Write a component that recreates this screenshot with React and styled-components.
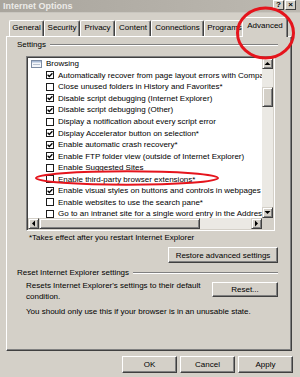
import React from "react";
import styled, { createGlobalStyle } from "styled-components";

const FACE = "#d4d0c8";

const GlobalStyle = createGlobalStyle`
  html, body { margin: 0; padding: 0; background: ${FACE}; }
  body { font-family: "Liberation Sans", Arial, sans-serif; color: #000; }
`;

const tabs = [
  { label: "General", w: 35 },
  { label: "Security", w: 36 },
  { label: "Privacy", w: 35 },
  { label: "Content", w: 36 },
  { label: "Connections", w: 53 },
  { label: "Programs", w: 41 },
  { label: "Advanced", w: 46, active: true },
];

const settings = [
  { text: "Automatically recover from page layout errors with Compatibility View", on: true },
  { text: "Close unused folders in History and Favorites*", on: false },
  { text: "Disable script debugging (Internet Explorer)", on: true },
  { text: "Disable script debugging (Other)", on: true },
  { text: "Display a notification about every script error", on: false },
  { text: "Display Accelerator button on selection*", on: true },
  { text: "Enable automatic crash recovery*", on: true },
  { text: "Enable FTP folder view (outside of Internet Explorer)", on: true },
  { text: "Enable Suggested Sites", on: false },
  { text: "Enable third-party browser extensions*", on: false },
  { text: "Enable visual styles on buttons and controls in webpages", on: true },
  { text: "Enable websites to use the search pane*", on: false },
  { text: "Go to an intranet site for a single word entry in the Address bar", on: false },
];

const Window = styled.div`
  position: relative;
  width: 300px;
  height: 377px;
  background: ${FACE};
  overflow: hidden;
  font-size: 8px;
`;

const TitleBar = styled.div`
  height: 12px;
  display: flex;
  align-items: center;
  justify-content: space-between;
  padding: 0 4px 0 3px;
  background: linear-gradient(90deg, #a9a59d, #bdb9b1);
  border-bottom: 1px solid #c9c6bf;
`;

const Title = styled.span`
  font-size: 9px;
  font-weight: bold;
  color: #ecebe8;
  line-height: 12px;
`;

const CaptionButtons = styled.div`
  display: flex;
  gap: 1px;
  align-self: flex-start;
`;

const CaptionButton = styled.div`
  width: 11px;
  height: 10px;
  box-sizing: border-box;
  background: ${FACE};
  border: 1px solid;
  border-color: #fff #404040 #404040 #fff;
  font-size: 8px;
  font-weight: bold;
  line-height: 8px;
  text-align: center;
`;

const TabStrip = styled.div`
  display: flex;
  align-items: flex-end;
  height: 19px;
  margin-top: 4px;
  padding-left: 9px;
`;

const Tab = styled.div`
  position: relative;
  box-sizing: border-box;
  width: ${(p) => p.$w}px;
  height: ${(p) => (p.$active ? 20 : 16)}px;
  margin-left: ${(p) => (p.$active ? -3 : 0)}px;
  margin-bottom: ${(p) => (p.$active ? -1 : 0)}px;
  z-index: ${(p) => (p.$active ? 2 : 1)};
  background: ${FACE};
  border-top: 1px solid #fff;
  border-left: 1px solid #fff;
  border-right: 1px solid #404040;
  border-radius: 2px 2px 0 0;
  box-shadow: inset -1px 0 #808080;
  font-size: 8px;
  line-height: ${(p) => (p.$active ? 15 : 14)}px;
  text-align: center;
  white-space: nowrap;
  overflow: hidden;
`;

const Panel = styled.div`
  box-sizing: border-box;
  width: 286px;
  height: 315px;
  margin-left: 6px;
  display: flex;
  flex-direction: column;
  padding: 3px 13px 0 10px;
  border: 1px solid;
  border-color: #fff #404040 #404040 #fff;
  box-shadow: inset -1px -1px #808080;
`;

const GroupHeader = styled.div`
  display: flex;
  align-items: center;
  gap: 4px;
  height: 10px;
  margin-top: ${(p) => p.$top || 0}px;
  line-height: 10px;
  white-space: nowrap;

  &::after {
    content: "";
    flex: 1;
    height: 0;
    border-top: 1px solid #808080;
    border-bottom: 1px solid #fff;
  }
`;

const ListBox = styled.div`
  box-sizing: border-box;
  width: 249px;
  height: 175px;
  margin: 6px 0 0 9px;
  padding: 1px;
  border: 1px solid;
  border-color: #808080 #fff #fff #808080;
  box-shadow: inset 1px 1px #404040, inset -1px -1px ${FACE};
  display: grid;
  grid-template-columns: 1fr 11px;
  grid-template-rows: 1fr 11px;
`;

const Viewport = styled.div`
  background: #fff;
  overflow: hidden;
`;

const Row = styled.div`
  height: 11.55px;
  display: flex;
  align-items: center;
  gap: 4px;
  padding-left: ${(p) => p.$indent}px;
  white-space: nowrap;
  font-size: 8px;
`;

const Box = styled.div`
  flex: none;
  width: 8px;
  height: 8px;
  box-sizing: border-box;
  border: 1px solid #1c1c1c;
  background: #fff;
  display: flex;
  align-items: center;
  justify-content: center;
`;

const VScroll = styled.div`
  display: flex;
  flex-direction: column;
`;

const HScroll = styled.div`
  display: flex;
`;

const Track = styled.div`
  flex: 1;
  display: flex;
  flex-direction: ${(p) => (p.$vertical ? "column" : "row")};
  background: #ebe9e4;
`;

const Thumb = styled.div`
  box-sizing: border-box;
  flex: none;
  width: ${(p) => (p.$vertical ? "100%" : `${p.$size}px`)};
  height: ${(p) => (p.$vertical ? `${p.$size}px` : "100%")};
  margin-top: ${(p) => (p.$vertical ? p.$offset : 0)}px;
  background: ${FACE};
  border: 1px solid;
  border-color: ${FACE} #404040 #404040 ${FACE};
  box-shadow: inset 1px 1px #fff, inset -1px -1px #808080;
`;

const ArrowButton = styled.div`
  flex: none;
  box-sizing: border-box;
  width: 11px;
  height: 11px;
  background: ${FACE};
  border: 1px solid;
  border-color: ${FACE} #404040 #404040 ${FACE};
  box-shadow: inset 1px 1px #fff, inset -1px -1px #808080;
  display: flex;
  align-items: center;
  justify-content: center;
`;

const Corner = styled.div`
  background: ${FACE};
`;

const Note = styled.div`
  margin: 2px 0 0 12px;
  line-height: 10px;
  white-space: nowrap;
`;

const Button = styled.div`
  box-sizing: border-box;
  flex: none;
  width: ${(p) => p.$w}px;
  height: ${(p) => p.$h}px;
  margin-top: ${(p) => p.$top || 0}px;
  align-self: ${(p) => (p.$end ? "flex-end" : "auto")};
  background: ${FACE};
  border: 1px solid;
  border-color: #fff #404040 #404040 #fff;
  box-shadow: inset -1px -1px #808080;
  display: flex;
  align-items: center;
  justify-content: center;
  font-size: 8px;
  white-space: nowrap;
`;

const ResetRow = styled.div`
  display: flex;
  justify-content: space-between;
  margin: 1.5px 0 0 9px;
`;

const Para = styled.div`
  line-height: 11px;
  margin-left: ${(p) => p.$left || 0}px;
  margin-top: ${(p) => p.$top || 0}px;
  white-space: nowrap;
`;

const Footer = styled.div`
  display: flex;
  justify-content: flex-end;
  gap: 3px;
  margin-top: 5px;
  padding-right: 7px;
`;

const Overlay = styled.svg`
  position: absolute;
  left: 0;
  top: 0;
  pointer-events: none;
  z-index: 5;
`;

const Check = () => (
  <svg width="6" height="6" viewBox="0 0 6 6">
    <path d="M0.6 2.8 L2.3 4.5 L5.4 1.2" fill="none" stroke="#000" strokeWidth="1.3" />
  </svg>
);

const Arrow = ({ dir }) => {
  const pts = {
    up: "0.5,4 3.5,1 6.5,4",
    down: "0.5,1 3.5,4 6.5,1",
    left: "4,0.5 1,3.5 4,6.5",
    right: "1,0.5 4,3.5 1,6.5",
  }[dir];
  const vertical = dir === "up" || dir === "down";
  return (
    <svg width={vertical ? 7 : 5} height={vertical ? 5 : 7} viewBox={vertical ? "0 0 7 5" : "0 0 5 7"}>
      <polygon points={pts} fill="#000" />
    </svg>
  );
};

const BrowsingIcon = () => (
  <svg width="11" height="8" viewBox="0 0 11 8" style={{ flex: "none" }}>
    <rect x="0.5" y="0.5" width="10" height="7" fill="#f4f6fa" stroke="#7d8ca3" />
    <rect x="1" y="1" width="9" height="1.5" fill="#a9bbd6" />
    <line x1="2" y1="4.5" x2="9" y2="4.5" stroke="#b8c2d0" />
  </svg>
);

export default function App() {
  return (
    <>
      <GlobalStyle />
      <Window>
        <TitleBar>
          <Title>Internet Options</Title>
          <CaptionButtons>
            <CaptionButton>?</CaptionButton>
            <CaptionButton>×</CaptionButton>
          </CaptionButtons>
        </TitleBar>

        <TabStrip>
          {tabs.map((t) => (
            <Tab key={t.label} $w={t.w} $active={t.active}>
              {t.label}
            </Tab>
          ))}
        </TabStrip>

        <Panel>
          <GroupHeader>Settings</GroupHeader>
          <ListBox>
            <Viewport>
              <Row $indent={3}>
                <BrowsingIcon />
                Browsing
              </Row>
              {settings.map((s) => (
                <Row key={s.text} $indent={18}>
                  <Box>{s.on && <Check />}</Box>
                  {s.text}
                </Row>
              ))}
            </Viewport>
            <VScroll>
              <ArrowButton>
                <Arrow dir="up" />
              </ArrowButton>
              <Track $vertical>
                <Thumb $vertical $size={20} $offset={18} />
              </Track>
              <ArrowButton>
                <Arrow dir="down" />
              </ArrowButton>
            </VScroll>
            <HScroll>
              <ArrowButton>
                <Arrow dir="left" />
              </ArrowButton>
              <Track>
                <Thumb $size={161} />
              </Track>
              <ArrowButton>
                <Arrow dir="right" />
              </ArrowButton>
            </HScroll>
            <Corner />
          </ListBox>
          <Note>*Takes effect after you restart Internet Explorer</Note>
          <Button $w={110} $h={16} $top={4} $end>
            Restore advanced settings
          </Button>
          <GroupHeader $top={5}>Reset Internet Explorer settings</GroupHeader>
          <ResetRow>
            <Para>
              Resets Internet Explorer's settings to their default
              <br />
              condition.
            </Para>
            <Button $w={66} $h={15} $top={2.5}>
              Reset...
            </Button>
          </ResetRow>
          <Para $left={9} $top={4}>
            You should only use this if your browser is in an unusable state.
          </Para>
        </Panel>

        <Footer>
          <Button $w={55} $h={17}>OK</Button>
          <Button $w={55} $h={17}>Cancel</Button>
          <Button $w={55} $h={17}>Apply</Button>
        </Footer>

        <Overlay width="300" height="377" viewBox="0 0 300 377">
          <ellipse cx="265.5" cy="33" rx="28" ry="25" fill="none" stroke="#e5141c" strokeWidth="3" />
          <ellipse cx="127" cy="178" rx="91" ry="6.8" fill="none" stroke="#e5141c" strokeWidth="2" />
        </Overlay>
      </Window>
    </>
  );
}
